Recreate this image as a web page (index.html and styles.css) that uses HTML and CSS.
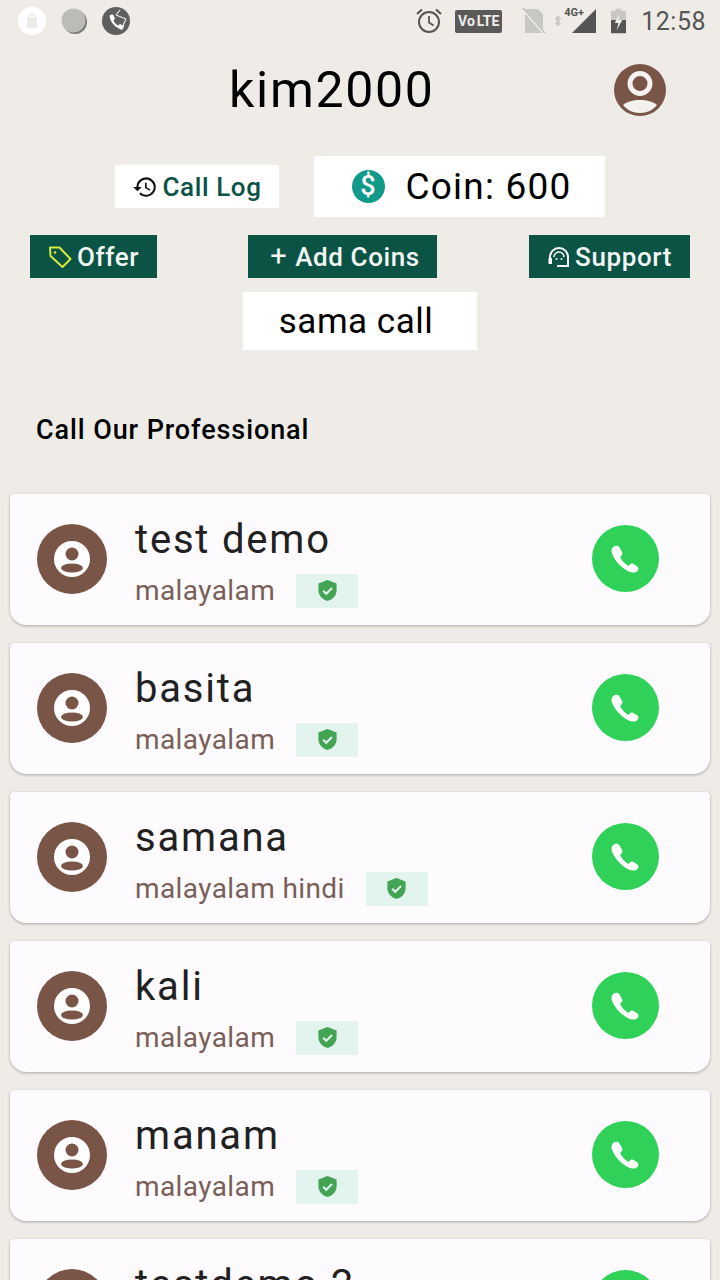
FILE: index.html
```html
<!DOCTYPE html>
<html lang="en">
<head>
    <meta charset="UTF-8">
    <meta name="viewport" content="width=device-width, initial-scale=1.0">
    <title>kim2000</title>
    <link rel="stylesheet" href="styles.css">
</head>
<body>
    <svg class="sprite" width="0" height="0">
        <symbol id="user" viewBox="0 0 52 52">
            <circle cx="26" cy="26" r="26" fill="#795548"/>
            <circle cx="26" cy="19.500" r="10" fill="none" stroke="#f5f1ee" stroke-width="5"/>
            <path d="M9 41c4-3.500 10-5 17-5s13 1.500 17 5c-4 5-10 8-17 8s-13-3-17-8z" fill="#f5f1ee"/>
        </symbol>
        <symbol id="agent" viewBox="0 0 70 70">
            <circle cx="35" cy="35" r="35" fill="#795548"/>
            <circle cx="35" cy="35" r="18" fill="#fff"/>
            <circle cx="35" cy="30" r="6.500" fill="#795548"/>
            <ellipse cx="35" cy="44" rx="11" ry="4.500" fill="#795548"/>
        </symbol>
        <symbol id="shield" viewBox="0 0 24 24">
            <path d="M12 1l9.500 3.800v7c0 5.300-3.900 9.600-9.500 11.200-5.600-1.600-9.500-5.900-9.500-11.200v-7z" fill="#43a554"/>
            <path d="M7.500 12.300l3.200 3.200 6-6" fill="none" stroke="#e3f3ee" stroke-width="2.200"/>
        </symbol>
        <symbol id="phone" viewBox="0 0 30 30">
            <path d="M5 5.500c-1.800 1.500-1.800 3.800-.6 6.300 2.500 5.200 6.500 9.700 12.300 12.800 2.700 1.400 5.600 1.500 7.300-.2 1.300-1.300 1-2.800-.3-3.700l-2.400-1.600c-1.200-.8-2.500-.6-3.400.4l-.9 1c-2.700-1.400-5.200-4-6.700-7l1-1c1-1 1.100-2.200.4-3.400L9.700 5.800C8.700 4.200 6.400 4.300 5 5.500z" fill="#fff"/>
        </symbol>
    </svg>

    <div class="status-bar">
        <div class="status-left">
            <svg class="notif" viewBox="0 0 28 28"><circle cx="14" cy="14" r="14" fill="#fff"/><path d="M9 10h10v10a1 1 0 0 1-1 1h-8a1 1 0 0 1-1-1z" fill="#ececea"/><path d="M11 10c0-4 6-4 6 0" fill="none" stroke="#ececea" stroke-width="1.500"/></svg>
            <svg class="notif" viewBox="0 0 28 28"><circle cx="15" cy="15" r="12" fill="#777"/><circle cx="13.500" cy="13.500" r="12" fill="#bdbbb8"/></svg>
            <svg class="notif" viewBox="0 0 28 28"><circle cx="14" cy="14" r="14" fill="#5f5f5f"/><path d="M8 8c-1 2 1 7 4 10s7 5 9 4l1-3-4-2-2 1.500c-2-1-3.500-3-4.500-5l1.500-2-2-4z" fill="#fff"/><path d="M14 8l4-5m-4 5l10 4M24 12l-5 11" fill="none" stroke="#eee" stroke-width="1.200"/></svg>
        </div>
        <div class="status-right">
            <svg class="alarm" viewBox="0 0 26 26"><circle cx="13" cy="14" r="10" fill="none" stroke="#555" stroke-width="2"/><path d="M13 8v6.500l4.500 3" fill="none" stroke="#555" stroke-width="1.800"/><path d="M1 6l5-4.500M25 6l-5-4.500" fill="none" stroke="#555" stroke-width="2.200"/></svg>
            <span class="volte">Vo<i>LTE</i></span>
            <svg class="sim" viewBox="0 0 24 26"><path d="M3 1h13l5 5v19H3z" fill="#c8c7c3"/><path d="M0 0l23 26" stroke="#efecea" stroke-width="3"/><path d="M1 0l22 25" stroke="#bbb" stroke-width="1.200"/></svg>
            <span class="arrows">⬍</span>
            <div class="signal">
                <span class="net">4G+</span>
                <svg viewBox="0 0 26 26"><path d="M26 0v26H0z" fill="#555"/></svg>
            </div>
            <svg class="battery" viewBox="0 0 16 26"><path d="M5 0h6v2h5v24H0V2h5z" fill="#c8c7c3"/><path d="M0 12h16v14H0z" fill="#555"/><path d="M9 5l-5 10h4l-2 8 6-11H8z" fill="#efecea"/></svg>
            <span class="clock">12:58</span>
        </div>
    </div>

    <header class="header">
        <h1 class="username">kim2000</h1>
        <svg class="avatar"><use href="#user"/></svg>
    </header>

    <div class="row-top">
        <a class="log-btn">
            <svg viewBox="0 0 24 24"><path d="M13 3a9 9 0 0 0-9 9H1l4 4 4-4H6a7 7 0 1 1 2 5l-1.400 1.400A9 9 0 1 0 13 3zm-1 5v5l4.300 2.500.7-1.200-3.500-2.100V8z" fill="#111"/></svg>
            Call Log
        </a>
        <div class="coin-box">
            <span class="coin-icon">$</span>
            <span>Coin: 600</span>
        </div>
    </div>

    <div class="row-actions">
        <a class="action-btn offer-btn">
            <svg viewBox="0 0 24 24"><path d="M2 2.500h9.500l11 11.500-8 8L2.500 11z" fill="none" stroke="#d9ea3c" stroke-width="2" stroke-linejoin="round"/><circle cx="7" cy="7.500" r="1.300" fill="#d9ea3c"/></svg>
            Offer
        </a>
        <a class="action-btn add-btn"><span class="plus">+</span> Add Coins</a>
        <a class="action-btn support-btn">
            <svg viewBox="0 0 24 24"><path d="M3 17V12a9 9 0 0 1 18 0v9H10" fill="none" stroke="#fff" stroke-width="2"/><path d="M7 12a5 5 0 0 1 10 0" fill="none" stroke="#fff" stroke-width="1.500"/><circle cx="9.500" cy="14" r="1" fill="#fff"/><circle cx="14.500" cy="14" r="1" fill="#fff"/><path d="M1.500 13h3.500v6H1.500z" fill="#fff"/></svg>
            Support
        </a>
    </div>

    <div class="row-sama">
        <div class="sama-box">sama call</div>
    </div>

    <h2 class="section-title">Call Our Professional</h2>

    <div class="card-list">
        <div class="card">
            <svg class="agent-pic"><use href="#agent"/></svg>
            <div class="card-info">
                <div class="agent-name">test demo</div>
                <div class="agent-meta"><span class="agent-lang">malayalam</span><span class="verified"><svg><use href="#shield"/></svg></span></div>
            </div>
            <a class="call-btn"><svg><use href="#phone"/></svg></a>
        </div>
        <div class="card">
            <svg class="agent-pic"><use href="#agent"/></svg>
            <div class="card-info">
                <div class="agent-name">basita</div>
                <div class="agent-meta"><span class="agent-lang">malayalam</span><span class="verified"><svg><use href="#shield"/></svg></span></div>
            </div>
            <a class="call-btn"><svg><use href="#phone"/></svg></a>
        </div>
        <div class="card">
            <svg class="agent-pic"><use href="#agent"/></svg>
            <div class="card-info">
                <div class="agent-name">samana</div>
                <div class="agent-meta"><span class="agent-lang">malayalam hindi</span><span class="verified"><svg><use href="#shield"/></svg></span></div>
            </div>
            <a class="call-btn"><svg><use href="#phone"/></svg></a>
        </div>
        <div class="card">
            <svg class="agent-pic"><use href="#agent"/></svg>
            <div class="card-info">
                <div class="agent-name">kali</div>
                <div class="agent-meta"><span class="agent-lang">malayalam</span><span class="verified"><svg><use href="#shield"/></svg></span></div>
            </div>
            <a class="call-btn"><svg><use href="#phone"/></svg></a>
        </div>
        <div class="card">
            <svg class="agent-pic"><use href="#agent"/></svg>
            <div class="card-info">
                <div class="agent-name">manam</div>
                <div class="agent-meta"><span class="agent-lang">malayalam</span><span class="verified"><svg><use href="#shield"/></svg></span></div>
            </div>
            <a class="call-btn"><svg><use href="#phone"/></svg></a>
        </div>
        <div class="card">
            <svg class="agent-pic"><use href="#agent"/></svg>
            <div class="card-info">
                <div class="agent-name">testdemo 2</div>
                <div class="agent-meta"><span class="agent-lang">malayalam</span><span class="verified"><svg><use href="#shield"/></svg></span></div>
            </div>
            <a class="call-btn"><svg><use href="#phone"/></svg></a>
        </div>
    </div>
</body>
</html>
```

FILE: styles.css
```css
html, body {
    height: 1280px;
    overflow: hidden;
}

body {
    margin: 0;
    background-color: #efece8;
    color: #000;
    font-family: Roboto, "Liberation Sans", sans-serif;
}

.sprite {
    display: none;
}

/* status bar */
.status-bar {
    display: flex;
    justify-content: space-between;
    align-items: center;
    height: 42px;
    padding: 0 14px 0 18px;
}

.status-left {
    display: flex;
    align-items: center;
    gap: 14px;
}

.notif {
    width: 28px;
    height: 28px;
}

.status-right {
    display: flex;
    align-items: center;
    color: #555;
}

.alarm {
    width: 26px;
    height: 26px;
    margin-right: 13px;
}

.volte {
    width: 47px;
    height: 23px;
    margin-right: 20px;
    background-color: #5c5a58;
    border-radius: 2px;
    color: #eee;
    font-size: 14px;
    font-weight: 700;
    line-height: 23px;
    text-align: center;
}

.volte i {
    font-style: normal;
    margin-left: 2px;
}

.sim {
    width: 24px;
    height: 26px;
}

.arrows {
    width: 16px;
    margin-left: 4px;
    color: #c8c7c3;
    font-size: 14px;
    text-align: center;
}

.signal {
    position: relative;
    width: 24px;
    height: 26px;
    margin-left: 6px;
}

.signal svg {
    display: block;
    width: 24px;
    height: 26px;
}

.net {
    position: absolute;
    left: -8px;
    top: -2px;
    font-size: 11px;
    font-weight: 700;
}

.battery {
    width: 15px;
    height: 26px;
    margin-left: 15px;
}

.clock {
    margin-left: 15px;
    font-size: 25px;
    letter-spacing: 0.5px;
}

/* header */
.header {
    display: flex;
    justify-content: space-between;
    align-items: center;
    height: 96px;
    padding: 0 54px 0 229px;
}

.username {
    margin: 0;
    font-size: 50px;
    font-weight: 400;
    letter-spacing: 1.7px;
}

.avatar {
    width: 52px;
    height: 52px;
}

/* buttons */
.row-top {
    display: flex;
    justify-content: center;
    align-items: center;
    gap: 35px;
    margin-top: 18px;
}

.log-btn {
    display: flex;
    align-items: center;
    justify-content: center;
    gap: 4px;
    width: 164px;
    height: 43px;
    background-color: #fff;
    color: #0b5345;
    font-size: 26px;
    font-weight: 500;
    letter-spacing: 0.6px;
}

.log-btn svg {
    width: 26px;
    height: 26px;
}

.coin-box {
    display: flex;
    align-items: center;
    justify-content: center;
    box-sizing: border-box;
    gap: 21px;
    width: 291px;
    height: 61px;
    padding-left: 4px;
    background-color: #fff;
    font-size: 37px;
    letter-spacing: 1.2px;
}

.coin-icon {
    width: 33px;
    height: 33px;
    border-radius: 50%;
    background-color: #11998a;
    color: #fff;
    font-size: 27px;
    font-weight: 500;
    letter-spacing: 0;
    line-height: 33px;
    text-align: center;
}

.row-actions {
    display: flex;
    gap: 91px;
    margin-top: 18px;
    padding: 0 30px;
}

.action-btn {
    display: flex;
    align-items: center;
    justify-content: center;
    gap: 5px;
    height: 43px;
    background-color: #0b5345;
    color: #f2f6f4;
    font-size: 26px;
    font-weight: 500;
    letter-spacing: 0.6px;
}

.action-btn svg {
    width: 24px;
    height: 24px;
}

.offer-btn {
    width: 127px;
}

.add-btn {
    box-sizing: border-box;
    width: 189px;
    padding-left: 5px;
    gap: 8px;
}

.support-btn {
    box-sizing: border-box;
    width: 161px;
    margin-left: 1px;
    gap: 4px;
}

.plus {
    font-size: 29px;
    font-weight: 400;
    line-height: 1;
}

.row-sama {
    display: flex;
    justify-content: center;
    margin-top: 14px;
}

.sama-box {
    box-sizing: border-box;
    width: 234px;
    height: 58px;
    padding-right: 8px;
    background-color: #fff;
    font-size: 35px;
    letter-spacing: 0.5px;
    line-height: 59px;
    text-align: center;
}

.section-title {
    margin: 64px 0 0 36px;
    height: 32px;
    font-size: 27px;
    font-weight: 500;
    letter-spacing: 0.9px;
    line-height: 32px;
}

/* cards */
.card-list {
    display: flex;
    flex-direction: column;
    gap: 18px;
    margin-top: 48px;
    padding: 0 10px;
}

.card {
    display: flex;
    align-items: center;
    flex-shrink: 0;
    box-sizing: border-box;
    height: 131px;
    padding: 0 51px 2px 27px;
    background-color: #fdfbfe;
    border-radius: 4px 4px 16px 16px;
    box-shadow: 0 1px 3px rgba(0, 0, 0, 0.3);
}

.agent-pic {
    width: 70px;
    height: 70px;
    flex-shrink: 0;
}

.card-info {
    flex: 1;
    margin-left: 28px;
    padding-top: 6px;
}

.agent-name {
    height: 47px;
    color: #212121;
    font-size: 40px;
    letter-spacing: 1.8px;
    line-height: 47px;
}

.agent-meta {
    display: flex;
    align-items: center;
    gap: 21px;
    margin-top: 11px;
}

.agent-lang {
    color: #795f57;
    font-size: 28px;
    letter-spacing: 0.4px;
}

.verified {
    display: flex;
    align-items: center;
    justify-content: center;
    width: 62px;
    height: 34px;
    background-color: #e3f3ee;
}

.verified svg {
    width: 23px;
    height: 25px;
}

.call-btn {
    display: flex;
    align-items: center;
    justify-content: center;
    width: 67px;
    height: 67px;
    border-radius: 50%;
    background-color: #30d158;
}

.call-btn svg {
    width: 38px;
    height: 38px;
}
```
